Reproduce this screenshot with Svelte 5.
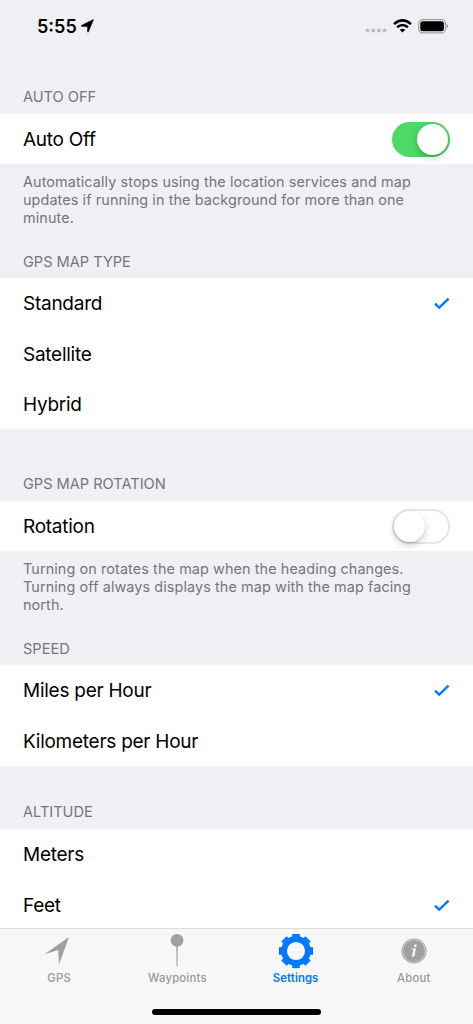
<script>
  let autoOff = $state(true);
  let rotation = $state(false);
  let mapType = $state('Standard');
  let speed = $state('Miles per Hour');
  let altitude = $state('Feet');

  const gearTeeth = [0, 45, 90, 135, 180, 225, 270, 315];
</script>

{#snippet toggle(on, flip, label)}
  <button class="switch" class:on role="switch" aria-checked={on} aria-label={label} onclick={flip}>
    <span class="knob"></span>
  </button>
{/snippet}

{#snippet option(name, selected, pick)}
  <button class="row" onclick={pick}>
    <span>{name}</span>
    {#if selected}
      <svg class="check" width="16" height="13" viewBox="0 0 16 13">
        <path d="M1 6.7 5.2 10.6 14.6 1.6" fill="none" stroke="#007aff" stroke-width="2.4" />
      </svg>
    {/if}
  </button>
{/snippet}

<div class="screen">
  <header class="status">
    <div class="clock">
      <span>5:55</span>
      <svg width="13" height="14" viewBox="0 0 13 14">
        <path d="M12.4.9 7.5 12.7Q6.7 13.8 6.5 12.6V7.4H1Q-.3 7.2.7 6.3L11.4.9Q12.6.2 12.4.9Z" stroke="#000" stroke-width=".5" />
      </svg>
    </div>
    <div class="signals">
      <svg width="22" height="5" viewBox="0 0 22 5" fill="#bdbdc2">
        <circle cx="2.5" cy="2.5" r="2" /><circle cx="8.2" cy="2.5" r="2" />
        <circle cx="13.9" cy="2.5" r="2" /><circle cx="19.6" cy="2.5" r="2" />
      </svg>
      <svg class="wifi" width="19" height="14" viewBox="0 0 19 14">
        <g fill="none" stroke="#000" stroke-width="2.5">
          <path d="M1 5.1Q9.5-2.3 18 5.1" /><path d="M4.1 8.3Q9.5 3.7 14.9 8.3" />
        </g>
        <path d="M9.5 13.6 6.7 10.8Q9.5 8.6 12.3 10.8Z" />
      </svg>
      <svg width="31" height="15" viewBox="0 0 31 15">
        <rect x=".7" y=".7" width="26.8" height="13.2" rx="4" fill="none" stroke="#a0a0a4" stroke-width="1.2" />
        <rect x="2.3" y="2.3" width="23.6" height="10" rx="2.5" />
        <path d="M28.7 5v4.6Q30.1 8.8 30.1 7.3T28.7 5Z" fill="#8e8e92" />
      </svg>
    </div>
  </header>

  <main>
    <h2 class="first">AUTO OFF</h2>
    <div class="row">
      <span>Auto Off</span>
      {@render toggle(autoOff, () => (autoOff = !autoOff), 'Auto Off')}
    </div>
    <p>Automatically stops using the location services and map<br />updates if running in the background for more than one<br />minute.</p>

    <h2 class="noted">GPS MAP TYPE</h2>
    {#each ['Standard', 'Satellite', 'Hybrid'] as name}
      {@render option(name, mapType === name, () => (mapType = name))}
    {/each}

    <h2 class="wide">GPS MAP ROTATION</h2>
    <div class="row">
      <span>Rotation</span>
      {@render toggle(rotation, () => (rotation = !rotation), 'Rotation')}
    </div>
    <p>Turning on rotates the map when the heading changes.<br />Turning off always displays the map with the map facing<br />north.</p>

    <h2 class="noted">SPEED</h2>
    {#each ['Miles per Hour', 'Kilometers per Hour'] as name}
      {@render option(name, speed === name, () => (speed = name))}
    {/each}

    <h2 class="medium">ALTITUDE</h2>
    {#each ['Meters', 'Feet'] as name}
      {@render option(name, altitude === name, () => (altitude = name))}
    {/each}
  </main>

  <nav>
    <div class="tabs">
      <div class="tab">
        <svg width="36" height="36" viewBox="0 0 36 36">
          <path d="M28 4 18 31.5 17.2 17 3.5 21.3Z" fill="#a0a0a0" />
        </svg>
        <span>GPS</span>
      </div>
      <div class="tab">
        <svg width="36" height="36" viewBox="0 0 36 36">
          <path d="M17.3 12h1.5l-.3 21.5h-.9Z" fill="#a0a0a0" />
          <circle cx="18" cy="7.3" r="6.4" fill="#a0a0a0" />
          <circle cx="20.4" cy="4.3" r=".8" fill="#c4c4c4" />
        </svg>
        <span>Waypoints</span>
      </div>
      <div class="tab active">
        <svg width="36" height="36" viewBox="0 0 36 36">
          <circle cx="18" cy="18" r="12" fill="none" stroke="#007aff" stroke-width="5.8" />
          {#each gearTeeth as angle}
            <path d="M14.2 5V.9H21.8V5Z" fill="#007aff" transform="rotate({angle} 18 18)" />
          {/each}
        </svg>
        <span>Settings</span>
      </div>
      <div class="tab">
        <svg width="36" height="36" viewBox="0 0 36 36">
          <circle cx="18" cy="18" r="12" fill="none" stroke="#a0a0a0" stroke-width="1.1" />
          <circle cx="18" cy="18" r="10.9" fill="#a0a0a0" />
          <circle cx="19.3" cy="12.8" r="1.4" fill="#f7f7f7" />
          <path d="M15.5 16.2 19.5 15.6 17.6 22.7Q18.3 22.9 19.5 21.5" fill="none" stroke="#f7f7f7" stroke-width=".9" />
          <path d="M17.5 16H19.6L17.8 23.3Q16.8 24.1 15.8 23.4Z" fill="#f7f7f7" />
        </svg>
        <span>About</span>
      </div>
    </div>
    <div class="home"></div>
  </nav>
</div>

<style>
  :global(body) {
    margin: 0;
    overflow: hidden;
  }
  .screen {
    display: flex;
    flex-direction: column;
    width: 473px;
    height: 1024px;
    overflow: hidden;
    background: #efeff4;
    color: #000;
    font-family: Inter, 'Liberation Sans', sans-serif;
  }
  .status {
    box-sizing: border-box;
    flex: none;
    display: flex;
    justify-content: space-between;
    height: 52px;
    padding: 0 24px 0 37px;
  }
  .clock,
  .signals {
    display: flex;
    align-items: center;
  }
  .clock {
    gap: 4px;
    font-size: 18px;
    font-weight: 600;
  }
  .signals {
    gap: 6px;
  }
  .signals svg:first-child {
    margin-top: 9px;
  }
  main {
    flex: 1;
    min-height: 0;
    overflow: hidden;
  }
  h2,
  p {
    margin: 0;
    padding: 0 23px;
    color: #76767b;
    font-size: 14.6px;
    font-weight: 400;
    white-space: nowrap;
  }
  h2 {
    box-sizing: border-box;
    display: flex;
    align-items: flex-end;
    padding-bottom: 7px;
    line-height: 18px;
    letter-spacing: -0.02px;
  }
  .first { height: 61.6px; }
  .noted { height: 46px; }
  .wide { height: 71.6px; }
  .medium { height: 63.2px; }
  .first,
  .wide,
  .medium {
    padding-bottom: 7.9px;
  }
  p {
    box-sizing: border-box;
    height: 68px;
    padding-top: 9px;
    font-size: 14.4px;
    line-height: 18.2px;
    letter-spacing: 0.1px;
  }
  .row {
    box-sizing: border-box;
    display: flex;
    align-items: center;
    justify-content: space-between;
    width: 100%;
    height: 50.35px;
    padding: 1.6px 23px 0;
    border: 0;
    background: #fff;
    color: #000;
    font: 400 19px Inter, 'Liberation Sans', sans-serif;
    letter-spacing: -0.26px;
    text-align: left;
  }
  div.row {
    padding-top: 1px;
  }
  .switch {
    box-sizing: border-box;
    display: flex;
    width: 58px;
    height: 35px;
    padding: 2px;
    border: 0;
    border-radius: 18px;
    background: #fff;
    box-shadow: inset 0 0 0 2px #e5e5e5;
  }
  .switch.on {
    justify-content: flex-end;
    background: #4cd964;
    box-shadow: none;
  }
  .knob {
    width: 31px;
    height: 31px;
    border-radius: 50%;
    background: #fff;
    box-shadow: 0 3px 7px rgba(0, 0, 0, 0.2), 0 1px 1px rgba(0, 0, 0, 0.12);
  }
  nav {
    box-sizing: border-box;
    flex: none;
    height: 96px;
    border-top: 1px solid #dedede;
    background: #f7f7f7;
  }
  .tabs {
    display: grid;
    grid-template-columns: repeat(4, 1fr);
    height: 80px;
  }
  .tab {
    display: flex;
    flex-direction: column;
    align-items: center;
    padding-top: 4px;
    color: #999;
    font-size: 11.3px;
    font-weight: 500;
    line-height: 14px;
    letter-spacing: 0.22px;
  }
  .tab span {
    margin-top: 2px;
  }
  .active {
    color: #007aff;
    font-weight: 600;
    letter-spacing: 0.1px;
  }
  .home {
    width: 169px;
    height: 6px;
    margin: 0 auto;
    border-radius: 3px;
    background: #000;
  }
</style>
